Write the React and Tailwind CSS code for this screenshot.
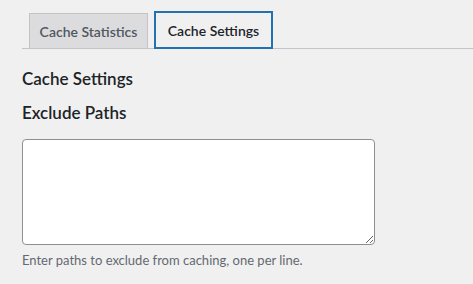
export default function App() {
  return (
    <div className="min-h-[284px] w-[473px] bg-[#f0f0f1] text-[#1d2327]" style={{ fontFamily: 'Lato, "Noto Sans", sans-serif' }}>
      <div className="ml-[22px] flex items-end gap-[6px] border-b border-[#c3c4c7] pl-[7px] pt-[11px]">
        <div className="-mb-px flex h-[36px] w-[119px] items-center justify-center border border-[#c3c4c7] bg-[#dcdcde] text-[14px] font-semibold text-[#50575e]">
          Cache Statistics
        </div>
        <div className="-mb-px flex h-[38px] w-[119px] items-center justify-center border-2 border-[#2271b1] bg-[#f0f0f1] text-[14px] font-semibold text-[#1d2327]">
          Cache Settings
        </div>
      </div>
      <div className="px-[22px]">
        <h2 className="mt-[19px] text-[17px] font-semibold leading-[22px]">Cache Settings</h2>
        <h3 className="mt-[12px] text-[17px] font-semibold leading-[22px]">Exclude Paths</h3>
        <textarea className="mt-[15px] block h-[106px] w-[353px] rounded-[4px] border border-[#8c8f94] bg-white" />
        <p className="mt-[6px] text-[13px] leading-[19px] text-[#646970]">Enter paths to exclude from caching, one per line.</p>
      </div>
    </div>
  );
}
